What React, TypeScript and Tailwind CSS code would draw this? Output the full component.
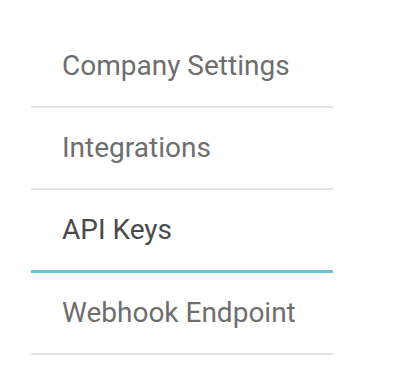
import React, { useState } from 'react';

const items = ['Company Settings', 'Integrations', 'API Keys', 'Webhook Endpoint'];

export default function App() {
  const [active, setActive] = useState('API Keys');

  return (
    <div className="w-[398px] h-[378px] bg-white pt-[26px] pl-[31px] font-['Roboto',sans-serif]">
      <ul className="w-[302px]">
        {items.map(item => (
          <li
            key={item}
            onClick={() => setActive(item)}
            className={`pl-[31px] pt-[24px] pb-[24px] text-[28px] leading-[32px] cursor-pointer ${
              item === active
                ? 'border-b-[3px] border-[#67c4cf] text-[#4a4a4a]'
                : 'border-b-2 border-[#e3e3e3] text-[#6e6e6e]'
            }`}
          >
            {item}
          </li>
        ))}
      </ul>
    </div>
  );
}
